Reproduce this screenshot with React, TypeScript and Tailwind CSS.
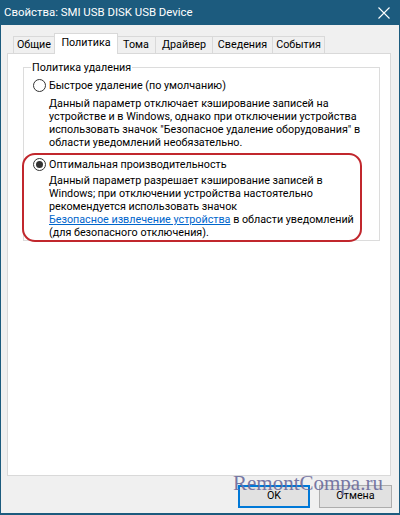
import React from "react";

const font = { fontFamily: 'Roboto, "Noto Sans", sans-serif' };

function Radio({ checked }: { checked?: boolean }) {
  return (
    <span className="w-[13px] h-[13px] rounded-full border border-[#333333] bg-white flex items-center justify-center shrink-0">
      {checked && <span className="w-[7px] h-[7px] rounded-full bg-[#333333]" />}
    </span>
  );
}

const tabs = [
  { label: "Общие", w: "w-[42px]" },
  { label: "Политика", w: "w-[64px]", active: true },
  { label: "Тома", w: "w-[40px]" },
  { label: "Драйвер", w: "w-[58px]" },
  { label: "Сведения", w: "w-[61px]" },
  { label: "События", w: "w-[53px]" },
];

export default function App() {
  return (
    <div
      className="relative w-[400px] h-[515px] bg-[#1c5b7e] flex flex-col text-black text-[10.75px]"
      style={font}
    >
      {/* Title bar */}
      <div className="h-[25px] flex items-center justify-between pl-[4px] pr-[10px] text-white text-[11.4px]">
        <span>Свойства: SMI USB DISK USB Device</span>
        <svg width="12" height="12" viewBox="0 0 12 12">
          <path d="M0.5 0.5 L11.5 11.5 M11.5 0.5 L0.5 11.5" stroke="white" strokeWidth="1.1" />
        </svg>
      </div>

      {/* Body */}
      <div className="flex-1 bg-[#f0f0f0] mx-[1px] mb-[2px] flex flex-col">
        {/* Tabs */}
        <div className="flex items-end pl-[12px] pt-[8px] h-[28px]">
          {tabs.map((t) =>
            t.active ? (
              <div
                key={t.label}
                className={`${t.w} h-[21px] -mb-[1px] -ml-[1px] -mr-[1px] relative z-10 bg-white border border-b-0 border-[#d9d9d9] flex items-center justify-center pb-[2px]`}
              >
                {t.label}
              </div>
            ) : (
              <div
                key={t.label}
                className={`${t.w} h-[17px] bg-[#f0f0f0] border border-b-0 border-[#d9d9d9] -ml-[1px] first:ml-0 flex items-center justify-center`}
              >
                {t.label}
              </div>
            )
          )}
        </div>

        {/* Panel */}
        <div className="ml-[6px] w-[384px] h-[423px] bg-white border border-[#d9d9d9] pt-[7px] pl-[15px]">
          <fieldset className="w-[357px] h-[180px] border border-[#dcdcdc] px-0 pb-0">
            <legend className="ml-[7px] px-[1px] leading-[13px]">Политика удаления</legend>

            {/* Option 1 */}
            <div className="pl-[9px] mt-[5px] leading-[13px]">
              <div className="flex items-center gap-[3px]">
                <Radio />
                <span>Быстрое удаление (по умолчанию)</span>
              </div>
              <div className="pl-[16px] mt-[5px] whitespace-nowrap">
                <div>Данный параметр отключает кэширование записей на</div>
                <div>устройстве и в Windows, однако при отключении устройства</div>
                <div>использовать значок "Безопасное удаление оборудования" в</div>
                <div>области уведомлений необязательно.</div>
              </div>
            </div>

            {/* Option 2 with red annotation */}
            <div className="-ml-[2px] mt-[4px] w-[340px] border-2 border-[#c1272d] rounded-[13px] pl-[9px] pt-[3px] pb-[1px] leading-[13px]">
              <div className="flex items-center gap-[3px]">
                <Radio checked />
                <span>Оптимальная производительность</span>
              </div>
              <div className="pl-[16px] mt-[3px] whitespace-nowrap">
                <div>Данный параметр разрешает кэширование записей в</div>
                <div>Windows; при отключении устройства настоятельно</div>
                <div>рекомендуется использовать значок</div>
                <div>
                  <span className="text-[#0066cc] underline">Безопасное извлечение устройства</span> в области уведомлений
                </div>
                <div>(для безопасного отключения).</div>
              </div>
            </div>
          </fieldset>
        </div>

        {/* Buttons */}
        <div className="flex justify-end gap-[9px] pr-[7px] mt-[9px]">
          <button className="w-[72px] h-[23px] bg-[#e1e1e1] border-2 border-[#0078d7] flex items-center justify-center">
            OK
          </button>
          <button className="w-[73px] h-[23px] bg-[#e1e1e1] border border-[#adadad] flex items-center justify-center">
            Отмена
          </button>
        </div>
      </div>

      {/* Watermark */}
      <div
        className="absolute left-[233px] top-[468px] text-[21px] text-[#6b6b9c] opacity-90 pointer-events-none"
        style={{ fontFamily: '"Liberation Serif", serif' }}
      >
        RemontCompa.ru
      </div>
    </div>
  );
}
